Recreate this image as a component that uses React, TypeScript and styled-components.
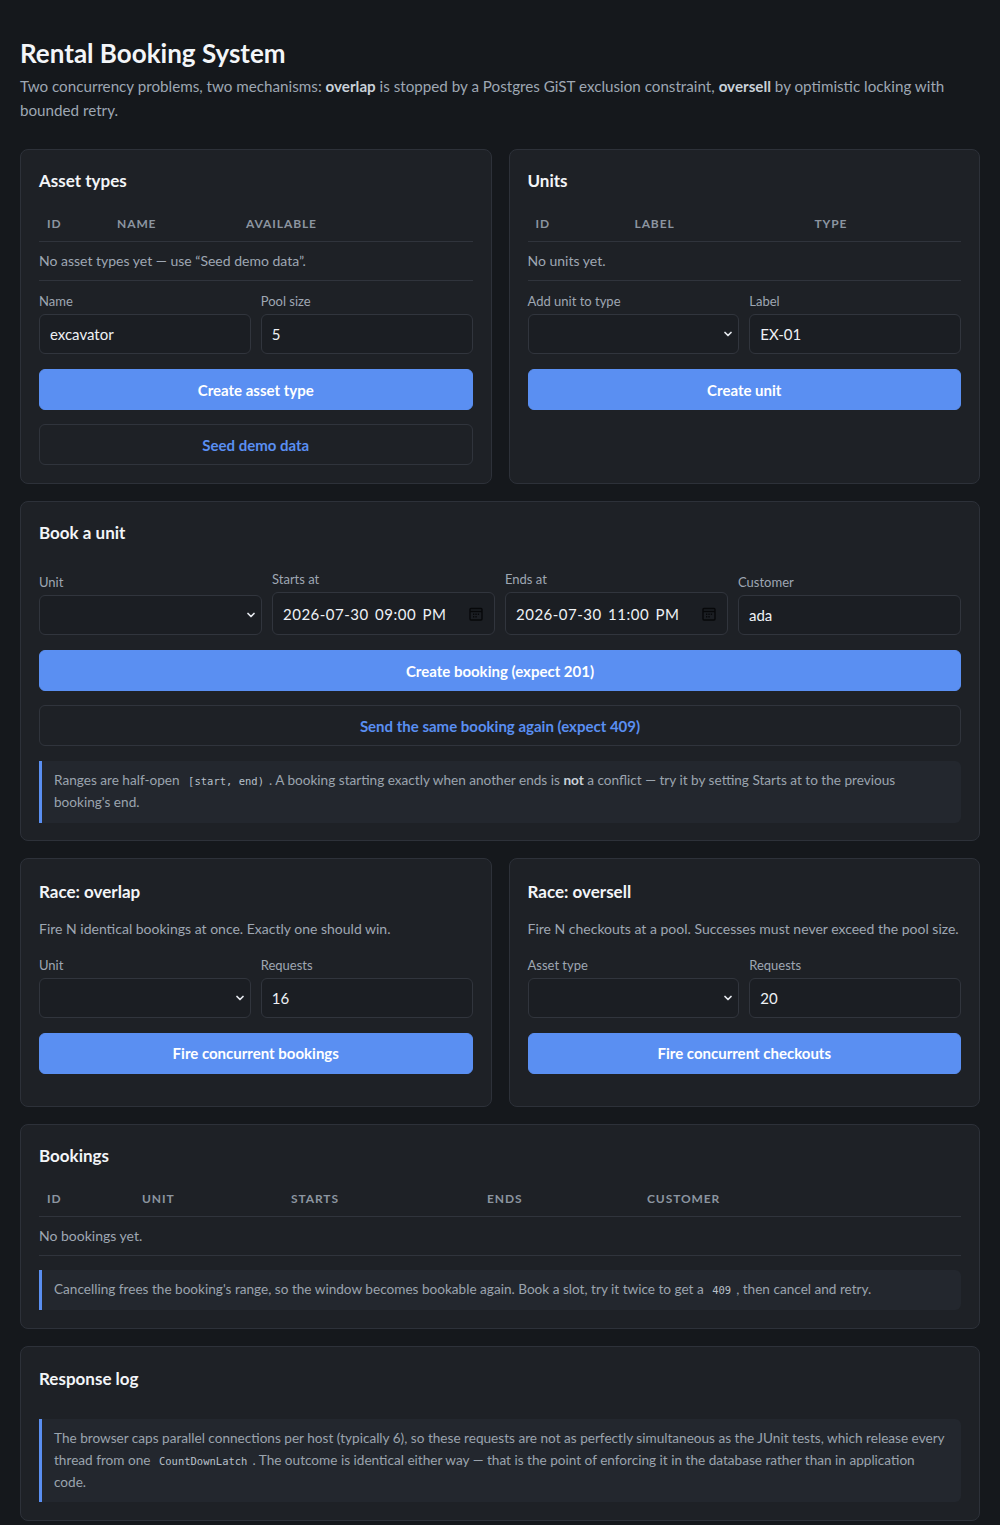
import React from 'react';
import styled, { createGlobalStyle } from 'styled-components';

const GlobalStyle = createGlobalStyle`
  * { box-sizing: border-box; }
  body {
    margin: 0;
    background: #15181c;
    color: #e6edf3;
    font-family: Lato, "Open Sans", "Noto Sans", sans-serif;
  }
`;

const Page = styled.div`
  padding: 36px 20px 8px;
  display: flex;
  flex-direction: column;
  gap: 17px;
`;

const Header = styled.header`
  margin-bottom: 10px;
`;

const Title = styled.h1`
  margin: 0 0 4px;
  font-size: 26px;
  line-height: 34px;
  font-weight: 700;
  color: #f3f5f8;
`;

const Lead = styled.p`
  margin: 0;
  font-size: 15.2px;
  line-height: 24px;
  color: #9ea7b3;
  strong {
    color: #c9d1d9;
    font-weight: 700;
  }
`;

const TwoCol = styled.div`
  display: grid;
  grid-template-columns: 1fr 1fr;
  gap: 17px;
`;

const Card = styled.section<{ $top?: number; $bottom?: number }>`
  background: #1e2126;
  border: 1px solid #2d3139;
  border-radius: 8px;
  padding: ${(p) => p.$top ?? 19}px 18px ${(p) => p.$bottom ?? 18}px;
  display: flex;
  flex-direction: column;
`;

const CardTitle = styled.h2<{ $gap?: number }>`
  margin: 0 0 ${(p) => p.$gap ?? 14}px;
  font-size: 17px;
  line-height: 24px;
  font-weight: 700;
  color: #f3f5f8;
`;

const Desc = styled.p`
  margin: 1px 0 17px;
  font-size: 14px;
  line-height: 20px;
  color: #9ea7b3;
`;

const Table = styled.table`
  width: 100%;
  border-collapse: collapse;
  margin-bottom: 11px;
  th {
    text-align: left;
    padding: 8px 8px;
    font-size: 12px;
    line-height: 18px;
    font-weight: 700;
    letter-spacing: 0.9px;
    text-transform: uppercase;
    color: #8c95a0;
    border-bottom: 1px solid #30343c;
  }
  td {
    padding: 9px 0;
    font-size: 14px;
    line-height: 20px;
    color: #9ea7b3;
    border-bottom: 1px solid #30343c;
  }
`;

const Fields = styled.div<{ $cols: number }>`
  display: grid;
  grid-template-columns: repeat(${(p) => p.$cols}, 1fr);
  gap: 10px;
  align-items: end;
  margin-bottom: 15px;
`;

const Field = styled.label`
  display: flex;
  flex-direction: column;
  gap: 4px;
`;

const Label = styled.span`
  font-size: 13px;
  line-height: 18px;
  color: #9ea7b3;
`;

const Control = styled.div`
  position: relative;
`;

const Input = styled.input<{ $tall?: boolean }>`
  width: 100%;
  height: ${(p) => (p.$tall ? 43 : 40)}px;
  padding: 0 10px;
  background: #1b1e23;
  border: 1px solid #31353d;
  border-radius: 6px;
  color: #eef1f5;
  font-family: inherit;
  font-size: 15px;
  letter-spacing: ${(p) => (p.$tall ? '0.5px' : '0')};
  word-spacing: ${(p) => (p.$tall ? '2px' : '0')};
  outline: none;
`;

const Select = styled.select`
  width: 100%;
  height: 40px;
  padding: 0 10px;
  background: #1b1e23;
  border: 1px solid #31353d;
  border-radius: 6px;
  color: #eef1f5;
  font-size: 15px;
  appearance: none;
  outline: none;
`;

const Overlay = styled.span<{ $right: number }>`
  position: absolute;
  right: ${(p) => p.$right}px;
  top: 50%;
  transform: translateY(-50%);
  display: flex;
  pointer-events: none;
`;

const Button = styled.button<{ $ghost?: boolean }>`
  width: 100%;
  height: 41px;
  border-radius: 6px;
  font-family: inherit;
  font-size: 15px;
  font-weight: 700;
  cursor: pointer;
  border: 1px solid ${(p) => (p.$ghost ? '#30343c' : '#5a8ff2')};
  background: ${(p) => (p.$ghost ? 'transparent' : '#5a8ff2')};
  color: ${(p) => (p.$ghost ? '#5a8ff2' : '#ffffff')};
  & + & {
    margin-top: 14px;
  }
`;

const Note = styled.div<{ $top?: number }>`
  margin-top: ${(p) => p.$top ?? 15}px;
  background: #23272e;
  border-left: 3px solid #5a8ff2;
  border-radius: 0 6px 6px 0;
  padding: 9px 12px;
  font-size: 13.6px;
  line-height: 21.4px;
  color: #9ba4ae;
  strong {
    color: #c9d1d9;
  }
  code {
    font-family: "DejaVu Sans Mono", "Liberation Mono", monospace;
    font-size: 10.5px;
    color: #b8c0ca;
    padding: 0 5px;
  }
`;

const Chevron = () => (
  <svg width="12" height="12" viewBox="0 0 24 24" fill="none" stroke="#e6e9ee" strokeWidth="3.5" strokeLinecap="round" strokeLinejoin="round">
    <path d="M6 9l6 6 6-6" />
  </svg>
);

const CalendarIcon = () => (
  <svg width="14" height="14" viewBox="0 0 14 14" fill="none" stroke="#07080a" strokeWidth="1.4">
    <rect x="1" y="1.5" width="12" height="11.5" rx="1" />
    <path d="M1 4.5h12" />
    <path d="M4 7.3h1.3M6.4 7.3h1.3M8.8 7.3h1.3M4 9.8h1.3M6.4 9.8h1.3" />
  </svg>
);

const SelectBox = () => (
  <Control>
    <Select defaultValue="">
      <option value="" />
    </Select>
    <Overlay $right={5}>
      <Chevron />
    </Overlay>
  </Control>
);

const DateBox = ({ value }: { value: string }) => (
  <Control>
    <Input $tall defaultValue={value} />
    <Overlay $right={12}>
      <CalendarIcon />
    </Overlay>
  </Control>
);

const Cols = ({ widths }: { widths: number[] }) => (
  <colgroup>
    {widths.map((w, i) => (
      <col key={i} style={{ width: w ? `${w}px` : 'auto' }} />
    ))}
  </colgroup>
);

export default function App() {
  return (
    <>
      <GlobalStyle />
      <Page>
        <Header>
          <Title>Rental Booking System</Title>
          <Lead>
            Two concurrency problems, two mechanisms: <strong>overlap</strong> is stopped by a Postgres GiST exclusion
            constraint, <strong>oversell</strong> by optimistic locking with bounded retry.
          </Lead>
        </Header>

        <TwoCol>
          <Card>
            <CardTitle>Asset types</CardTitle>
            <Table>
              <Cols widths={[70, 129, 0]} />
              <thead>
                <tr>
                  <th>ID</th>
                  <th>Name</th>
                  <th>Available</th>
                </tr>
              </thead>
              <tbody>
                <tr>
                  <td colSpan={3}>No asset types yet — use “Seed demo data”.</td>
                </tr>
              </tbody>
            </Table>
            <Fields $cols={2}>
              <Field>
                <Label>Name</Label>
                <Input defaultValue="excavator" />
              </Field>
              <Field>
                <Label>Pool size</Label>
                <Input defaultValue="5" />
              </Field>
            </Fields>
            <Button>Create asset type</Button>
            <Button $ghost>Seed demo data</Button>
          </Card>

          <Card>
            <CardTitle>Units</CardTitle>
            <Table>
              <Cols widths={[99, 180, 0]} />
              <thead>
                <tr>
                  <th>ID</th>
                  <th>Label</th>
                  <th>Type</th>
                </tr>
              </thead>
              <tbody>
                <tr>
                  <td colSpan={3}>No units yet.</td>
                </tr>
              </tbody>
            </Table>
            <Fields $cols={2}>
              <Field>
                <Label>Add unit to type</Label>
                <SelectBox />
              </Field>
              <Field>
                <Label>Label</Label>
                <Input defaultValue="EX-01" />
              </Field>
            </Fields>
            <Button>Create unit</Button>
          </Card>
        </TwoCol>

        <Card $bottom={17}>
          <CardTitle $gap={25}>Book a unit</CardTitle>
          <Fields $cols={4}>
            <Field>
              <Label>Unit</Label>
              <SelectBox />
            </Field>
            <Field>
              <Label>Starts at</Label>
              <DateBox value="2026-07-30 09:00 PM" />
            </Field>
            <Field>
              <Label>Ends at</Label>
              <DateBox value="2026-07-30 11:00 PM" />
            </Field>
            <Field>
              <Label>Customer</Label>
              <Input defaultValue="ada" />
            </Field>
          </Fields>
          <Button>Create booking (expect 201)</Button>
          <Button $ghost>Send the same booking again (expect 409)</Button>
          <Note>
            Ranges are half-open <code>[start, end)</code>. A booking starting exactly when another ends is{' '}
            <strong>not</strong> a conflict — try it by setting Starts at to the previous booking's end.
          </Note>
        </Card>

        <TwoCol>
          <Card $top={21} $bottom={32}>
            <CardTitle>Race: overlap</CardTitle>
            <Desc>Fire N identical bookings at once. Exactly one should win.</Desc>
            <Fields $cols={2}>
              <Field>
                <Label>Unit</Label>
                <SelectBox />
              </Field>
              <Field>
                <Label>Requests</Label>
                <Input defaultValue="16" />
              </Field>
            </Fields>
            <Button>Fire concurrent bookings</Button>
          </Card>

          <Card $top={21} $bottom={32}>
            <CardTitle>Race: oversell</CardTitle>
            <Desc>Fire N checkouts at a pool. Successes must never exceed the pool size.</Desc>
            <Fields $cols={2}>
              <Field>
                <Label>Asset type</Label>
                <SelectBox />
              </Field>
              <Field>
                <Label>Requests</Label>
                <Input defaultValue="20" />
              </Field>
            </Fields>
            <Button>Fire concurrent checkouts</Button>
          </Card>
        </TwoCol>

        <Card>
          <CardTitle>Bookings</CardTitle>
          <Table>
            <Cols widths={[95, 149, 196, 160, 0]} />
            <thead>
              <tr>
                <th>ID</th>
                <th>Unit</th>
                <th>Starts</th>
                <th>Ends</th>
                <th>Customer</th>
              </tr>
            </thead>
            <tbody>
              <tr>
                <td colSpan={5}>No bookings yet.</td>
              </tr>
            </tbody>
          </Table>
          <Note $top={3}>
            Cancelling frees the booking's range, so the window becomes bookable again. Book a slot, try it twice to get
            a <code>409</code>, then cancel and retry.
          </Note>
        </Card>

        <Card $top={20}>
          <CardTitle $gap={28}>Response log</CardTitle>
          <Note $top={0}>
            The browser caps parallel connections per host (typically 6), so these requests are not as perfectly
            simultaneous as the JUnit tests, which release every thread from one <code>CountDownLatch</code>. The
            outcome is identical either way — that is the point of enforcing it in the database rather than in
            application code.
          </Note>
        </Card>
      </Page>
    </>
  );
}
